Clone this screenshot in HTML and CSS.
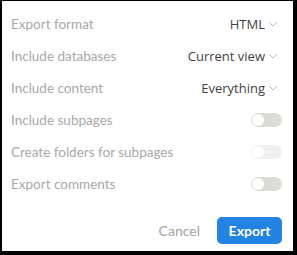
FILE: index.html
```html
<!DOCTYPE html>
<html lang="en">

<head>
  <meta charset="UTF-8" />
  <meta name="viewport" content="width=device-width, initial-scale=1.0" />
  <title>Export</title>
  <link rel="stylesheet" href="styles.css">
</head>

<body>
  <div class="dialog">
    <div class="row">
      <span class="label">Export format</span>
      <span class="select">HTML <svg class="chev" viewBox="0 0 8 5"><path d="M0.5 0.5 L4 4 L7.5 0.5" /></svg></span>
    </div>
    <div class="row">
      <span class="label">Include databases</span>
      <span class="select">Current view <svg class="chev" viewBox="0 0 8 5"><path d="M0.5 0.5 L4 4 L7.5 0.5" /></svg></span>
    </div>
    <div class="row">
      <span class="label">Include content</span>
      <span class="select">Everything <svg class="chev" viewBox="0 0 8 5"><path d="M0.5 0.5 L4 4 L7.5 0.5" /></svg></span>
    </div>
    <div class="row">
      <span class="label">Include subpages</span>
      <span class="toggle"><span class="knob"></span></span>
    </div>
    <div class="row">
      <span class="label">Create folders for subpages</span>
      <span class="toggle disabled"><span class="knob"></span></span>
    </div>
    <div class="row">
      <span class="label">Export comments</span>
      <span class="toggle"><span class="knob"></span></span>
    </div>

    <div class="actions">
      <button class="cancel">Cancel</button>
      <button class="export">Export</button>
    </div>
  </div>
</body>

</html>
```

FILE: styles.css
```css
/* Base */
body {
  margin: 0;
  font-family: Lato, 'Open Sans', sans-serif;
  background-color: #fff;
}

/* Dialog frame */
.dialog {
  box-sizing: border-box;
  width: 297px;
  height: 255px;
  border-style: solid;
  border-color: #000;
  border-width: 1px 4px 4px 2px;
  padding: 7px 11px 0 9px;
  background-color: #fff;
}

/* Option rows */
.row {
  display: flex;
  justify-content: space-between;
  align-items: center;
  height: 32px;
}

.label {
  font-size: 13.5px;
  color: #a8a8a8;
}

.select {
  display: flex;
  align-items: center;
  gap: 4px;
  font-family: 'Open Sans', sans-serif;
  font-size: 13px;
  color: #3f3f3f;
}

.chev {
  width: 8px;
  height: 5px;
  fill: none;
  stroke: #b5b5b5;
  stroke-width: 1;
  margin-right: 5px;
}

/* Toggle switches */
.toggle {
  box-sizing: border-box;
  display: flex;
  align-items: center;
  width: 31px;
  height: 14px;
  padding: 1px;
  border-radius: 7px;
  background-color: #dcdbd8;
}

.toggle .knob {
  width: 12px;
  height: 12px;
  border-radius: 50%;
  background-color: #fff;
}

.toggle.disabled {
  background-color: #efefee;
}

/* Footer buttons */
.actions {
  display: flex;
  justify-content: flex-end;
  align-items: center;
  gap: 11px;
  margin-top: 17px;
}

.actions button {
  font-family: Lato, 'Open Sans', sans-serif;
  font-size: 14px;
  border: none;
  cursor: pointer;
}

.cancel {
  background: none;
  color: #a3a3a3;
  padding: 0 6px;
}

.export {
  width: 65px;
  height: 27px;
  border-radius: 5px;
  background-color: #2383e2;
  color: #fff;
  font-weight: bold;
}
```
